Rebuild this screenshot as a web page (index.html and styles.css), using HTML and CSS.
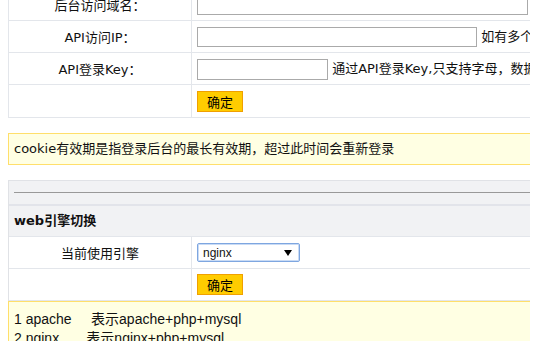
FILE: index.html
```html
<!DOCTYPE html>
<html lang="zh-CN">
<head>
  <meta charset="UTF-8">
  <title>系统设置</title>
  <link rel="stylesheet" href="styles.css">
</head>
<body>
<div class="page">
  <table class="form">
    <tr>
      <td class="label">后台访问域名：</td>
      <td><input type="text" class="ipt ipt-long"> 支持多个域名</td>
    </tr>
    <tr>
      <td class="label">API访问IP：</td>
      <td><input type="text" class="ipt ipt-mid"> 如有多个IP请用逗号隔开</td>
    </tr>
    <tr>
      <td class="label">API登录Key：</td>
      <td><input type="text" class="ipt ipt-short"> 通过API登录Key,只支持字母，数据和下划线</td>
    </tr>
    <tr class="row-btn">
      <td class="label"></td>
      <td><button class="btn">确定</button></td>
    </tr>
  </table>

  <div class="tip">cookie有效期是指登录后台的最长有效期，超过此时间会重新登录</div>

  <div class="panel">
    <div class="panel-top"><hr class="rule"></div>
    <h3 class="panel-title">web引擎切换</h3>
    <table class="form">
      <tr>
        <td class="label">当前使用引擎</td>
        <td>
          <span class="select-wrap">
            <select class="sel">
              <option>nginx</option>
              <option>apache</option>
            </select>
          </span>
        </td>
      </tr>
      <tr>
        <td class="label"></td>
        <td><button class="btn">确定</button></td>
      </tr>
    </table>
  </div>
  <div class="tip tip-list">
    1 apache&nbsp;&nbsp;&nbsp;&nbsp;&nbsp;表示apache+php+mysql<br>
    2 nginx&nbsp;&nbsp;&nbsp;&nbsp;&nbsp;&nbsp;&nbsp;表示nginx+php+mysql
  </div>
</div>
</body>
</html>
```

FILE: styles.css
```css
body { margin: 0 8px; font-family: "DejaVu Sans", "Noto Sans CJK SC", sans-serif; font-size: 13px; color: #111; background: #fff; }
.page { width: 760px; margin-top: -12px; }

.form { width: 100%; border-collapse: collapse; background: #fff; }
.form td { border: 1px solid #e3e6eb; height: 31px; padding: 0 5px; vertical-align: middle; white-space: nowrap; }
.form td.label { width: 172px; text-align: center; }
.form .row-btn td { height: 32px; }

.ipt { height: 20px; box-sizing: border-box; border: 1px solid #aaa; padding: 0 3px; margin: 0; vertical-align: middle; font: inherit; }
.ipt-long { width: 331px; }
.ipt-mid { width: 280px; }
.ipt-short { width: 131px; height: 21px; }

.btn { width: 46px; height: 21px; padding: 0; border: 1px solid #f0a000; background: #ffcc00; color: #000; font: inherit; vertical-align: middle; }

.tip { background: #ffffe3; border: 1px solid #ffdf6b; padding: 0 5px; line-height: 30px; margin: 15px 0; white-space: nowrap; }
.tip-list { margin: 0; line-height: 19px; padding-top: 8px; font-family: "Liberation Sans", "Noto Sans CJK SC", sans-serif; font-size: 14px; }

.panel { background: #f1f2f4; border: 1px solid #e0e2e6; border-bottom: none; border-right: none; }
.panel-top { padding: 11px 0 11px 5px; }
.rule { margin: 0; border: none; border-top: 1px solid #999; height: 0; }
.panel-title { margin: 0; border-top: 2px solid #e2e4ea; height: 30px; line-height: 30px; padding-left: 5px; font-size: 13px; }
.panel .form td:first-child { border-left: none; }

.select-wrap { position: relative; display: inline-block; vertical-align: middle; }
.sel { appearance: none; -webkit-appearance: none; width: 103px; height: 19px; box-sizing: border-box; border: 1px solid #7ea6e0; box-shadow: inset 0 0 0 1px #c9dbf5; border-radius: 2px; background: #fff; font: 12px "Liberation Sans", sans-serif; padding: 0 0 0 5px; margin: 0; color: #111; }
.select-wrap::after { content: ""; position: absolute; right: 8px; top: 7px; border-left: 4px solid transparent; border-right: 4px solid transparent; border-top: 6px solid #000; pointer-events: none; }
```
